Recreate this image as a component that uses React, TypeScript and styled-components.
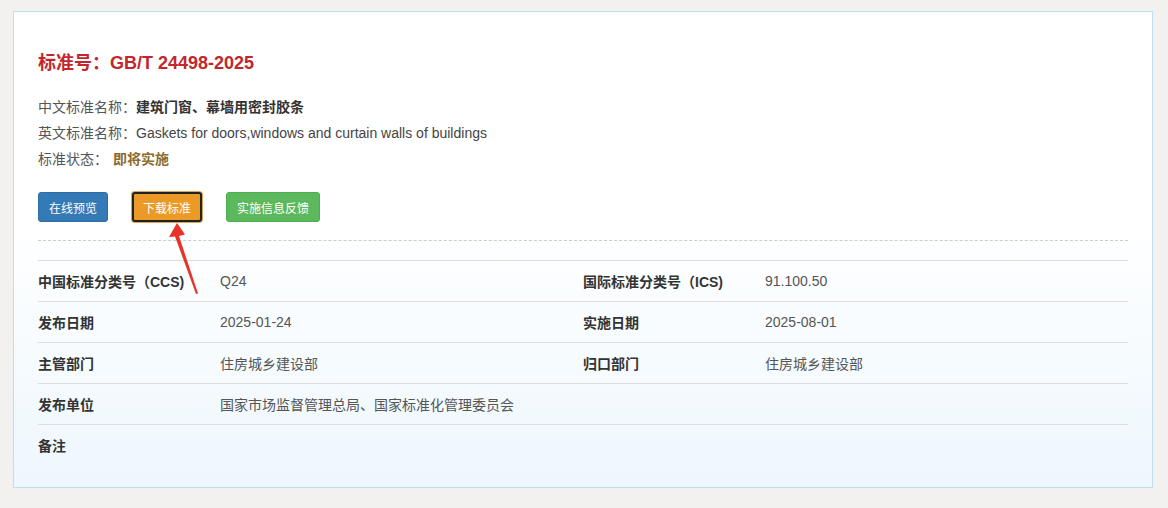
import React from 'react'
import styled, { createGlobalStyle } from 'styled-components'

const GlobalStyle = createGlobalStyle`
    html, body {
        margin: 0;
        padding: 0;
        background: #f2f1f0;
    }
    body {
        font-family: Arial, "Liberation Sans", "Noto Sans CJK SC", sans-serif;
        color: #333;
    }
`

const Page = styled.div`
    padding: 11px 15px 19px 13px;
`

const Card = styled.section`
    position: relative;
    width: 1090px;
    padding: 38px 24px 22px;
    border: 1px solid #bcdff0;
    background: linear-gradient(to bottom, #ffffff 45%, #edf7fd 100%);
`

const Title = styled.h1`
    margin: 0;
    font-size: 18px;
    line-height: 26px;
    font-weight: bold;
    color: #c1272d;
`

const InfoList = styled.div`
    margin-top: 18px;
`

const InfoRow = styled.div`
    font-size: 14px;
    line-height: 26px;
    color: #555;
`

const InfoValue = styled.span<{ $tone?: 'status' }>`
    font-weight: bold;
    color: ${p => (p.$tone === 'status' ? '#8a6d2f' : '#333')};
    margin-left: ${p => (p.$tone === 'status' ? '5px' : '0')};
`

const PlainValue = styled.span`
    color: #444;
`

const Actions = styled.div`
    display: flex;
    gap: 24px;
    margin-top: 20px;
`

const Button = styled.button<{ $kind: 'blue' | 'orange' | 'green' }>`
    box-sizing: border-box;
    height: 30px;
    padding: 0 10px;
    border-radius: 3px;
    font-family: inherit;
    font-size: 12px;
    color: #fff;
    cursor: pointer;
    border: 1px solid ${p => (p.$kind === 'blue' ? '#2e6da4' : p.$kind === 'green' ? '#4cae4c' : '#222')};
    background: ${p => (p.$kind === 'blue' ? '#337ab7' : p.$kind === 'green' ? '#5cb85c' : '#eb9a28')};
    ${p =>
        p.$kind === 'orange' &&
        `
        border-width: 2px;
        padding: 0 9px;
        box-shadow: 0 0 0 1px #d9a35a;
        `}
`

const Divider = styled.hr`
    margin: 18px 0 0;
    border: 0;
    border-top: 1px dashed #ccc;
`

const Table = styled.div`
    margin-top: 19px;
    border-top: 1px solid #ddd;
`

const Row = styled.div<{ $last?: boolean }>`
    display: grid;
    grid-template-columns: 182px 363px 182px 363px;
    height: 40px;
    align-items: center;
    border-bottom: ${p => (p.$last ? '0' : '1px solid #ddd')};
    font-size: 14px;
`

const Label = styled.div`
    font-weight: bold;
    color: #333;
`

const Value = styled.div`
    color: #555;
`

const Arrow = styled.svg`
    position: absolute;
    left: 150px;
    top: 205px;
    overflow: visible;
`

const rows: [string, string, string?, string?][] = [
    ['中国标准分类号（CCS)', 'Q24', '国际标准分类号（ICS)', '91.100.50'],
    ['发布日期', '2025-01-24', '实施日期', '2025-08-01'],
    ['主管部门', '住房城乡建设部', '归口部门', '住房城乡建设部'],
    ['发布单位', '国家市场监督管理总局、国家标准化管理委员会'],
    ['备注', ''],
]

export default function App() {
    return (
        <Page>
            <GlobalStyle />
            <Card>
                <Title>标准号：GB/T 24498-2025</Title>
                <InfoList>
                    <InfoRow>
                        中文标准名称：<InfoValue>建筑门窗、幕墙用密封胶条</InfoValue>
                    </InfoRow>
                    <InfoRow>
                        英文标准名称：<PlainValue>Gaskets for doors,windows and curtain walls of buildings</PlainValue>
                    </InfoRow>
                    <InfoRow>
                        标准状态：<InfoValue $tone="status">即将实施</InfoValue>
                    </InfoRow>
                </InfoList>
                <Actions>
                    <Button $kind="blue">在线预览</Button>
                    <Button $kind="orange">下载标准</Button>
                    <Button $kind="green">实施信息反馈</Button>
                </Actions>
                <Divider />
                <Table>
                    {rows.map(([l1, v1, l2, v2], i) => (
                        <Row key={l1} $last={i === rows.length - 1}>
                            <Label>{l1}</Label>
                            <Value>{v1}</Value>
                            {l2 && <Label>{l2}</Label>}
                            {v2 && <Value>{v2}</Value>}
                        </Row>
                    ))}
                </Table>
                {/* annotation arrow pointing at the download button */}
                <Arrow width="40" height="90" viewBox="0 0 40 90">
                    <polygon points="13,6 5,20 11,19.5 32,77 34,76.5 15,19 21,17.5" fill="#e8322a" />
                </Arrow>
            </Card>
        </Page>
    )
}
